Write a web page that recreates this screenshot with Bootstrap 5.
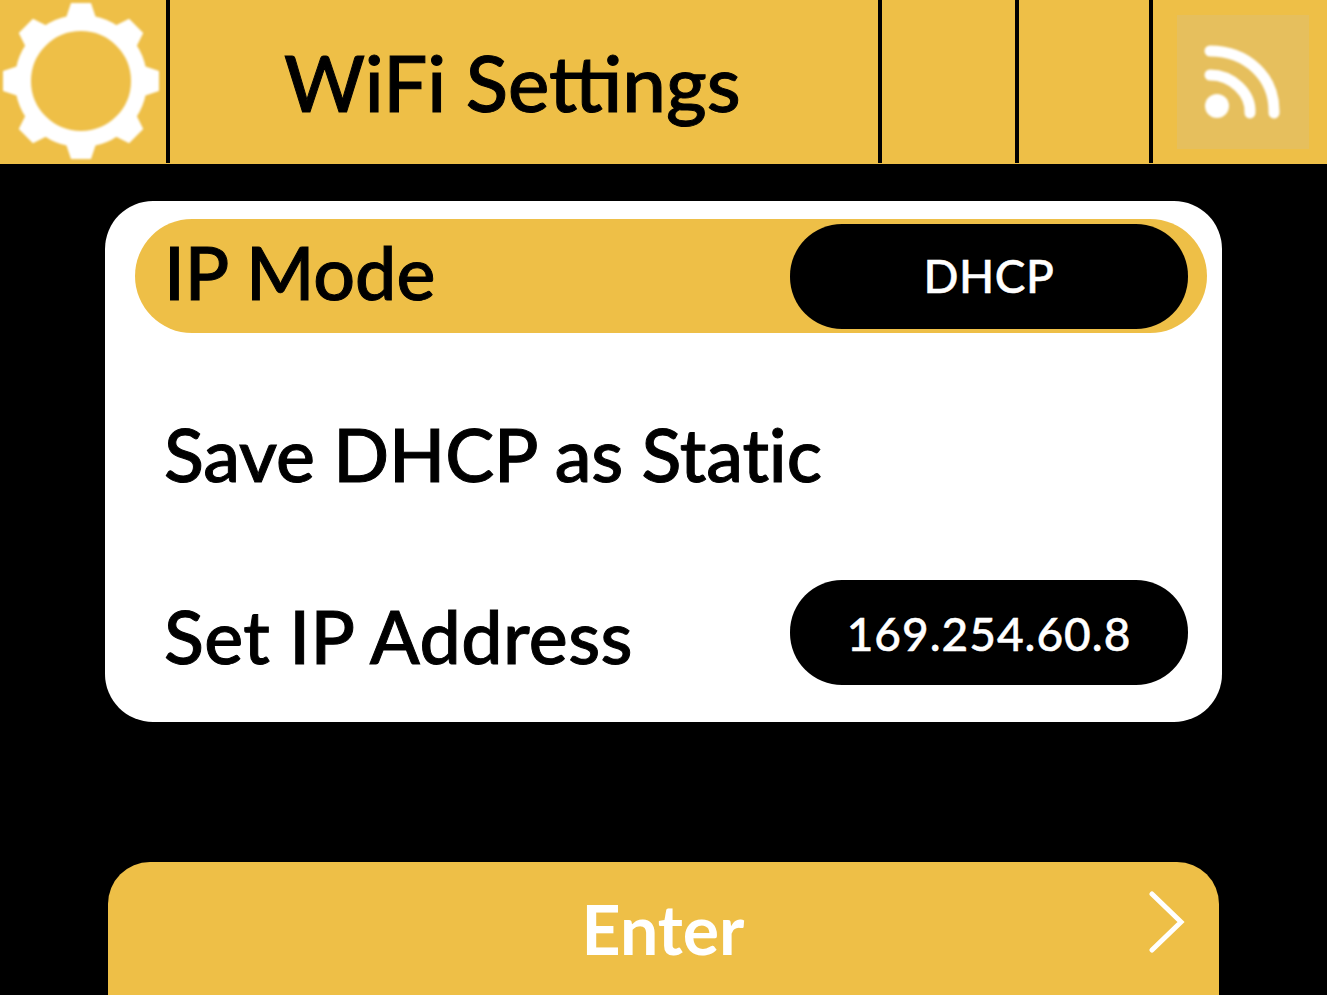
<!DOCTYPE html>
<html lang="en">
  <head>
    <meta charset="UTF-8" />
    <meta name="viewport" content="width=device-width, initial-scale=1" />
    <title>WiFi Settings</title>
    <link
      href="https://cdn.jsdelivr.net/npm/bootstrap@5.3.0/dist/css/bootstrap.min.css"
      rel="stylesheet"
    />
    <style>
      html, body { height: 100%; }
      body {
        background: #000;
        color: #000;
        font-family: "Lato", "Liberation Sans", sans-serif;
        font-weight: 500;
        overflow: hidden;
      }
      .screen { width: 1327px; height: 995px; }
      .top-bar { height: 164px; background: #eebf47; }
      .top-cell { border-right: 4px solid #000; height: 163px; }
      .cell-gear { width: 170px; padding: 0 0 2px 1px; }
      .cell-title { width: 712px; font-size: 78px; padding-left: 114px; line-height: 1; -webkit-text-stroke: 1px #000; white-space: nowrap; }
      .cell-blank-a { width: 137px; }
      .cell-blank-b { width: 134px; }
      .cell-wifi { flex: 1; padding: 15px 18px 14px 24px; }
      .wifi-box { width: 132px; height: 134px; background: #e6bf5d; }
      .soft-icon { filter: blur(0.9px); }
      .menu-panel {
        width: 1117px;
        height: 521px;
        margin: 37px 0 0 105px;
        padding: 18px 15px 38px 30px;
        background: #fff;
        border-radius: 48px;
      }
      .menu-row { height: 114px; padding: 0 19px 0 29px; font-size: 73.5px; line-height: 1; white-space: nowrap; -webkit-text-stroke: 1px #000; }
      .menu-row.is-active { background: #eebf47; border-radius: 57px; }
      .menu-gap { margin-top: 68px; }
      .row-text { margin-bottom: 8px; }
      .row-text-narrow { letter-spacing: -0.13px; }
      .row-text-wide { letter-spacing: 0.4px; }
      .value-pill {
        width: 398px;
        height: 105px;
        border-radius: 52px;
        background: #000;
        color: #fff;
        font-size: 46px;
        line-height: 1;
        letter-spacing: 0.6px;
        -webkit-text-stroke: 0.5px #fff;
      }
      .pill-raised { margin-bottom: 16px; padding-top: 4px; letter-spacing: 1px; }
      .enter-btn {
        width: 1111px;
        height: 133px;
        margin: 140px 0 0 108px;
        padding: 0 34px 0 0;
        background: #eebf47;
        border-radius: 42px 42px 0 0;
        color: #fff;
        font-size: 68px;
        font-weight: 700;
        line-height: 1;
      }
      .enter-label { padding-left: 69px; }
      .enter-arrow { margin-bottom: 14px; }
    </style>
  </head>
  <body>
    <div class="screen d-flex flex-column">
      <div class="top-bar d-flex">
        <div class="top-cell cell-gear d-flex align-items-center">
          <svg class="soft-icon" width="160" height="160" viewBox="0 0 160 160">
            <g fill="#fff">
              <path id="tooth" d="M70 2h20l6 18h-32z" />
              <use href="#tooth" transform="rotate(45 80 80)" />
              <use href="#tooth" transform="rotate(90 80 80)" />
              <use href="#tooth" transform="rotate(135 80 80)" />
              <use href="#tooth" transform="rotate(180 80 80)" />
              <use href="#tooth" transform="rotate(225 80 80)" />
              <use href="#tooth" transform="rotate(270 80 80)" />
              <use href="#tooth" transform="rotate(315 80 80)" />
            </g>
            <circle cx="80" cy="80" r="58" fill="none" stroke="#fff" stroke-width="16" />
          </svg>
        </div>
        <div class="top-cell cell-title d-flex align-items-center">WiFi Settings</div>
        <div class="top-cell cell-blank-a"></div>
        <div class="top-cell cell-blank-b"></div>
        <div class="cell-wifi">
          <div class="wifi-box d-flex align-items-center justify-content-center">
            <svg class="soft-icon" width="132" height="134" viewBox="0 0 132 134">
              <circle cx="40" cy="91" r="12" fill="#fff" />
              <path d="M33 60C55 60 74 78 73 98" fill="none" stroke="#fff" stroke-width="11" stroke-linecap="round" />
              <path d="M33 36C70 36 98 62 97 98" fill="none" stroke="#fff" stroke-width="11" stroke-linecap="round" />
            </svg>
          </div>
        </div>
      </div>

      <div class="menu-panel">
        <div class="menu-row is-active d-flex align-items-center justify-content-between">
          <span class="row-text">IP Mode</span>
          <span class="value-pill d-flex align-items-center justify-content-center">DHCP</span>
        </div>
        <div class="menu-row menu-gap d-flex align-items-center">
          <span class="row-text row-text-narrow">Save DHCP as Static</span>
        </div>
        <div class="menu-row menu-gap d-flex align-items-center justify-content-between">
          <span class="row-text row-text-wide">Set IP Address</span>
          <span class="value-pill pill-raised d-flex align-items-center justify-content-center">169.254.60.8</span>
        </div>
      </div>

      <div class="enter-btn d-flex align-items-center justify-content-between">
        <span class="flex-grow-1 text-center enter-label">Enter</span>
        <svg class="enter-arrow" width="36" height="62" viewBox="0 0 36 62">
          <path d="M3 3l29 28L3 59" fill="none" stroke="#fff" stroke-width="5" stroke-linecap="round" />
        </svg>
      </div>
    </div>

    <script src="https://cdn.jsdelivr.net/npm/bootstrap@5.3.0/dist/js/bootstrap.bundle.min.js"></script>
  </body>
</html>
